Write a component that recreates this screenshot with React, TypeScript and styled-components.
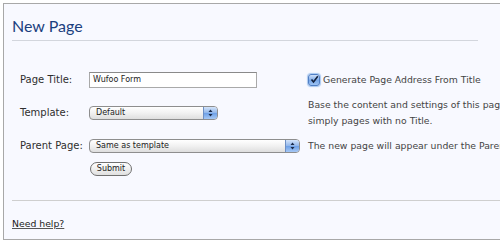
import React from 'react';
import styled, {createGlobalStyle} from 'styled-components';

const GlobalStyle = createGlobalStyle`
  html, body {
    margin: 0;
    padding: 0;
    background: #ffffff;
    overflow: hidden;
  }
  body {
    font-family: "DejaVu Sans", Verdana, sans-serif;
  }
`;

// outer panel, only top/left/bottom edges are visible in the window
const Panel = styled.div`
  margin: 3px 0 0 3px;
  width: 540px;
  height: 237px;
  box-sizing: border-box;
  border: 1px solid #a8a8a8;
  border-right: none;
  background: #f8f9ff;
  padding-left: 8px;
  display: flex;
  flex-direction: column;
`;

const Header = styled.div`
  width: 466px;
  height: 37px;
  box-sizing: border-box;
  padding-top: 12px;
  border-bottom: 1px solid #d3d6dd;
`;

const Title = styled.h2`
  margin: 0;
  font-family: Lato, "Open Sans", sans-serif;
  font-size: 16px;
  line-height: 19px;
  font-weight: 400;
  color: #1b3f7e;
`;

const Form = styled.div`
  margin-top: 22px;
  padding-left: 8px;
  display: flex;
  flex-direction: column;
`;

const Row = styled.div`
  height: 33px;
  display: flex;
  align-items: center;
`;

const Label = styled.label`
  width: 69px;
  flex: none;
  font-size: 10px;
  color: #2e2e2e;
`;

const Control = styled.div`
  width: 219px;
  flex: none;
  display: flex;
  align-items: center;
`;

const Help = styled.div`
  flex: none;
  width: 260px;
  white-space: nowrap;
  font-size: 9.3px;
  line-height: 16px;
  color: #444;
  display: flex;
  align-items: center;
  gap: 3px;
`;

const TextInput = styled.div`
  width: 168px;
  height: 16px;
  box-sizing: border-box;
  border: 1px solid #a9a9a9;
  border-top-color: #8a8a8a;
  background: #fff;
  font-size: 8px;
  line-height: 14px;
  padding-left: 3px;
  color: #222;
`;

const Select = styled.div<{ $width: number }>`
  width: ${({$width}) => $width}px;
  height: 14px;
  box-sizing: border-box;
  border: 1px solid #8e8e8e;
  border-radius: 4px;
  background: linear-gradient(#ffffff, #f1f1f1 50%, #dedede);
  display: flex;
  align-items: center;
  overflow: hidden;
  font-size: 8px;
  color: #222;
`;

const SelectText = styled.span`
  flex: 1;
  padding-left: 6px;
`;

const SelectArrows = styled.span`
  width: 13px;
  height: 100%;
  flex: none;
  border-left: 1px solid #6d8fc4;
  background: linear-gradient(#d4e4fa, #8fb5ea 50%, #6c9fe6 51%, #a6c8f5);
  display: flex;
  align-items: center;
  justify-content: center;
`;

const Checkbox = styled.span`
  width: 12px;
  height: 12px;
  box-sizing: border-box;
  flex: none;
  border: 1px solid #4f7ec4;
  border-radius: 3px;
  background: linear-gradient(#cfe0f8, #79a8e8 55%, #9cc2f2);
  box-shadow: 0 0 1px 1px #a8c8f0;
  display: flex;
  align-items: center;
  justify-content: center;
`;

const ButtonRow = styled.div`
  padding-left: 70px;
  display: flex;
`;

const Button = styled.button`
  width: 42px;
  height: 14px;
  padding: 0;
  border: 1px solid #707070;
  border-radius: 7px;
  background: linear-gradient(#ffffff, #efefef 50%, #e0e0e0);
  font-family: "DejaVu Sans", Verdana, sans-serif;
  font-size: 8px;
  line-height: 12px;
  color: #222;
`;

const Footer = styled.div`
  margin-top: 24px;
  border-top: 1px solid #cfcfcf;
  padding-top: 11px;
`;

const HelpLink = styled.a`
  font-size: 9.3px;
  color: #222;
  text-decoration: underline;
  text-decoration-color: #555;
`;

const Arrows = () => (
  <svg width="5" height="8" viewBox="0 0 5 8">
    <path d="M2.5 0.5 L4.5 3 L0.5 3 Z M2.5 7.5 L4.5 5 L0.5 5 Z" fill="#1a2a4a"/>
  </svg>
);

const Check = () => (
  <svg width="9" height="9" viewBox="0 0 9 9">
    <path d="M1.5 4.5 L3.5 7 L7.8 1.2" fill="none" stroke="#13213d" strokeWidth="1.6"/>
  </svg>
);

export default function App() {
  return (
    <>
      <GlobalStyle/>
      <Panel>
        <Header>
          <Title>New Page</Title>
        </Header>
        <Form>
          <Row>
            <Label>Page Title:</Label>
            <Control>
              <TextInput>Wufoo Form</TextInput>
            </Control>
            <Help>
              <Checkbox><Check/></Checkbox>
              <span>Generate Page Address From Title</span>
            </Help>
          </Row>
          <Row>
            <Label>Template:</Label>
            <Control>
              <Select $width={129}>
                <SelectText>Default</SelectText>
                <SelectArrows><Arrows/></SelectArrows>
              </Select>
            </Control>
            <Help>
              <span>Base the content and settings of this page on another page. Templates are<br/>simply pages with no Title.</span>
            </Help>
          </Row>
          <Row>
            <Label>Parent Page:</Label>
            <Control>
              <Select $width={211}>
                <SelectText>Same as template</SelectText>
                <SelectArrows><Arrows/></SelectArrows>
              </Select>
            </Control>
            <Help>
              <span>The new page will appear under the Parent Page in menus.</span>
            </Help>
          </Row>
          <ButtonRow>
            <Button>Submit</Button>
          </ButtonRow>
        </Form>
        <Footer>
          <HelpLink href="#">Need help?</HelpLink>
        </Footer>
      </Panel>
    </>
  );
}
